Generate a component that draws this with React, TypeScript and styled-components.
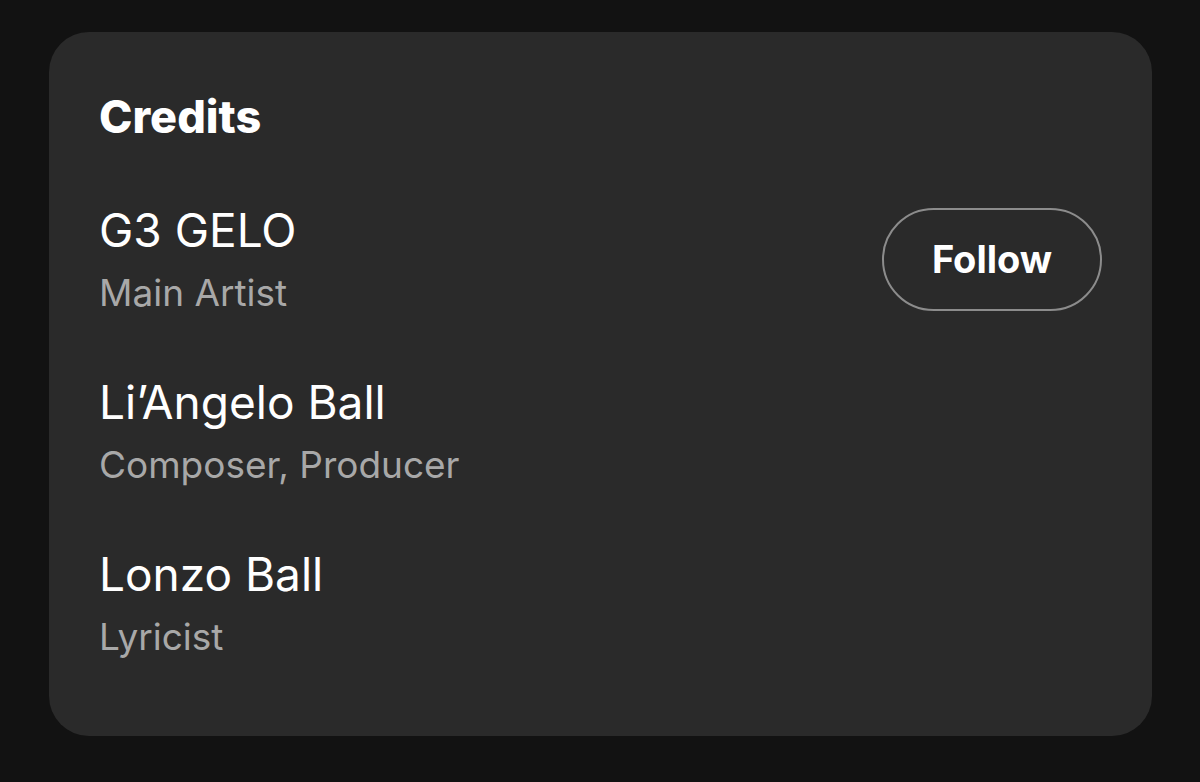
import React from 'react';
import styled, { createGlobalStyle } from 'styled-components';

const GlobalStyle = createGlobalStyle`
  html, body {
    margin: 0;
    padding: 0;
    background: #121212;
  }
  body {
    font-family: Inter, "Noto Sans", sans-serif;
    color: #ffffff;
  }
`;

const Page = styled.div`
  padding: 32px 48px 46px 49px;
  height: 782px;
  box-sizing: border-box;
`;

const Card = styled.section`
  background: #2a2a2a;
  border-radius: 40px;
  height: 100%;
  box-sizing: border-box;
  padding: 63px 50px 0 50px;
`;

const Title = styled.h2`
  margin: 0 0 68px 0;
  font-size: 45px;
  line-height: 44px;
  font-weight: 800;
`;

const List = styled.div`
  display: flex;
  flex-direction: column;
  gap: 68px;
`;

const Row = styled.div`
  display: flex;
  align-items: center;
  justify-content: space-between;
`;

const Info = styled.div`
  display: flex;
  flex-direction: column;
  gap: 21px;
`;

const Name = styled.div`
  font-size: 46px;
  line-height: 46px;
  font-weight: 400;
`;

const Role = styled.div`
  font-size: 37px;
  line-height: 37px;
  color: #a8a8a8;
`;

const FollowButton = styled.button`
  width: 220px;
  height: 103px;
  border: 2px solid #8c8c8c;
  border-radius: 52px;
  background: transparent;
  color: #ffffff;
  font-family: Inter, "Noto Sans", sans-serif;
  font-size: 38px;
  font-weight: 700;
  cursor: pointer;
`;

const credits = [
  { name: 'G3 GELO', role: 'Main Artist', follow: true },
  { name: 'Li\u2019Angelo Ball', role: 'Composer, Producer', follow: false },
  { name: 'Lonzo Ball', role: 'Lyricist', follow: false },
];

const App: React.FC = () => {
  return (
    <>
      <GlobalStyle />
      <Page>
        <Card>
          <Title>Credits</Title>
          <List>
            {credits.map((c) => (
              <Row key={c.name}>
                <Info>
                  <Name>{c.name}</Name>
                  <Role>{c.role}</Role>
                </Info>
                {c.follow && <FollowButton>Follow</FollowButton>}
              </Row>
            ))}
          </List>
        </Card>
      </Page>
    </>
  );
};

export default App;
